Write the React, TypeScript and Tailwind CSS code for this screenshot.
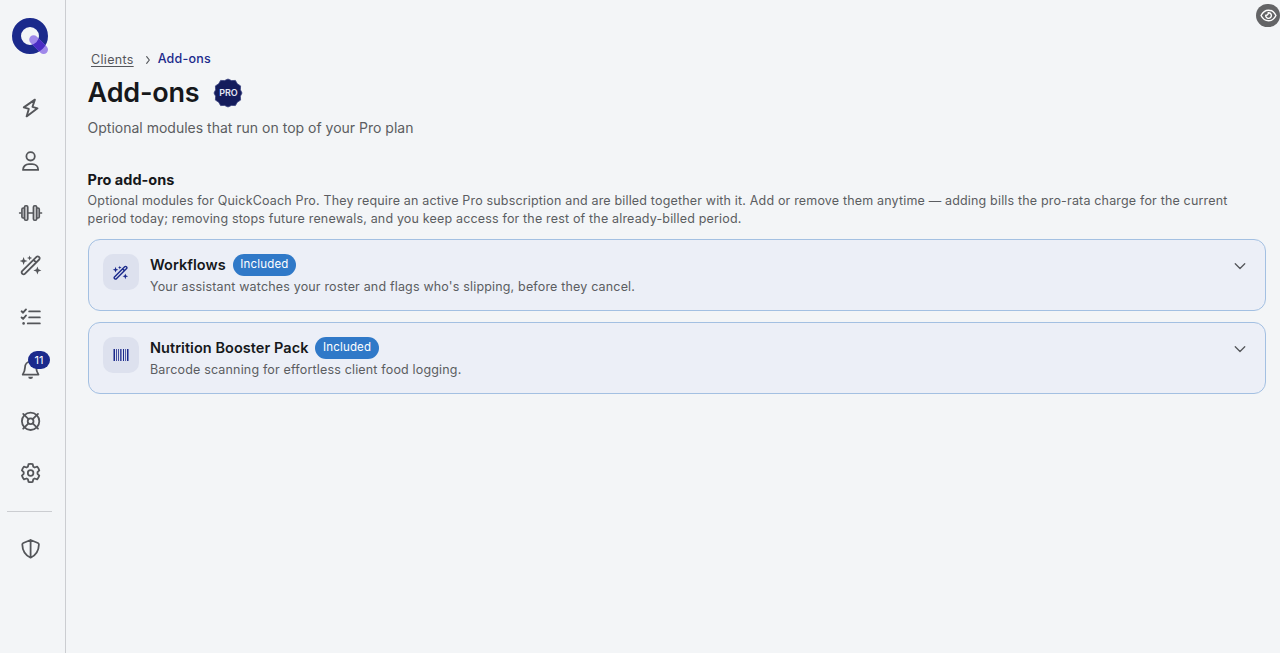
import type { ReactNode } from 'react'
import clsx from 'clsx'

function Icon({
    children,
    className = 'size-6 -translate-x-[0.4px]',
    width = 2,
}: {
    children: ReactNode
    className?: string
    width?: number
}) {
    return (
        <svg
            viewBox="0 0 24 24"
            fill="none"
            stroke="currentColor"
            strokeWidth={width}
            strokeLinecap="round"
            strokeLinejoin="round"
            className={clsx('shrink-0', className)}
        >
            {children}
        </svg>
    )
}

function BoltIcon() {
    return (
        <Icon width={1.9}>
            <path d="M16.3 3.6 5.2 11.400l5 1.500-2.200 7.500 10.900-8.100-5-1.500z" />
        </Icon>
    )
}

function UserIcon() {
    return (
        <Icon width={1.8}>
            <circle cx="12" cy="7.300" r="4.200" />
            <path d="M4.400 20.900c0-3.400 2.600-5.700 6-5.700h3.200c3.400 0 6 2.300 6 5.700z" />
        </Icon>
    )
}

function DumbbellIcon() {
    return (
        <Icon width={1.6}>
            <path d="M9.200 12h5.600M.9 12h1.200M21.900 12h1.200" />
            <g fill="#c9cacd">
                <path d="M5.900 7H4.600c-.8 0-1.300.6-1.300 1.300v7.400c0 .8.5 1.300 1.300 1.300h1.300M18.100 7h1.300c.8 0 1.300.6 1.300 1.300v7.400c0 .8-.5 1.300-1.300 1.300h-1.300" />
                <rect x="5.900" y="4.800" width="3.300" height="14.400" rx="1.300" />
                <rect x="14.800" y="4.800" width="3.300" height="14.400" rx="1.300" />
            </g>
        </Icon>
    )
}

function WandIcon({
    className,
    width = 1.8,
}: {
    className?: string
    width?: number
}) {
    return (
        <Icon className={className} width={width}>
            <path d="M3.500 18.200 17.900 3.800a1.600 1.600 0 0 1 2.300 0l.4.400a1.600 1.600 0 0 1 0 2.300L6.200 20.900a1.600 1.600 0 0 1-2.300 0l-.4-.4a1.600 1.600 0 0 1 0-2.300zM14.900 6.800l2.700 2.700" />
            <g fill="currentColor" stroke="none">
                <path d="m5 4 1.100 2.900L9 8l-2.900 1.100L5 12 3.900 9.100 1 8l2.900-1.100z" />
                <path d="m11 2.400.7 1.900 1.900.7-1.900.7L11 7.600l-.7-1.900L8.400 5l1.900-.7z" />
                <path d="m18.800 13.400 1.100 2.900 2.900 1.100-2.900 1.100-1.100 2.900-1.100-2.900-2.900-1.100 2.900-1.100z" />
            </g>
        </Icon>
    )
}

function ListIcon() {
    return (
        <Icon width={1.900}>
            <path d="m3 6.300 1.500 1.400 2.900-3.300M3 12.500l1.500 1.400 2.900-3.400M10.600 6.400h10.600M10.600 12.400h10.600M9.200 18.400h12" />
            <circle cx="5" cy="18.400" r="1.300" fill="currentColor" stroke="none" />
        </Icon>
    )
}

function BellIcon() {
    return (
        <Icon width={1.8}>
            <path d="M12 3v1.600M12 4.600c-3.400 0-5.600 2.600-5.600 5.800 0 3-.9 4.800-2.300 7.200h15.800c-1.400-2.400-2.300-4.200-2.300-7.200 0-3.200-2.200-5.800-5.600-5.800z" />
            <path d="M9.600 19.800h4.800a2.400 2.200 0 0 1-4.800 0z" fill="currentColor" stroke="none" />
        </Icon>
    )
}

function LifeRingIcon() {
    return (
        <Icon width={1.8}>
            <circle cx="12" cy="12.300" r="8.700" />
            <circle cx="12" cy="12.300" r="2.900" />
            <path d="m4.600 4.900 5.300 5.300M19.400 4.900l-5.300 5.300M4.600 19.700l5.300-5.300M19.400 19.700l-5.300-5.300" />
        </Icon>
    )
}

function GearIcon() {
    return (
        <Icon width={1.800}>
            <path d="M9.900 3.200q2.100-.6 4.200 0l.6 2.500 1.400.8 2.500-.8q1.500 1.600 2.100 3.700L18.900 11.200v1.600l1.800 1.800q-.6 2.100-2.100 3.700l-2.500-.8-1.400.8-.6 2.500q-2.100.6-4.200 0l-.6-2.500-1.400-.8-2.500.8q-1.500-1.600-2.100-3.700l1.800-1.800v-1.600L3.300 9.400q.6-2.100 2.100-3.700l2.500.8 1.400-.8z" />
            <circle cx="12" cy="12" r="2.800" />
        </Icon>
    )
}

function ShieldIcon() {
    return (
        <Icon width={1.800}>
            <path d="m12 3 7.300 3c.6.300 1 .8 1 1.400-.1 5-2.200 10.300-8.300 13.300-6.100-3-8.200-8.300-8.300-13.300 0-.6.4-1.100 1-1.400zM12 3v17.700" />
        </Icon>
    )
}

function BarcodeIcon() {
    return (
        <svg viewBox="0 0 16 14" fill="currentColor" className="h-[14px] w-4">
            <path d="M.5 1H2v12H.5zM3.200 1h.8v12h-.8zM5.200 1h.8v12h-.8zM7.200 1h1.300v12H7.200zM10 1h1v12h-1zM12 1h.7v12H12zM14 1h1.500v12H14z" />
        </svg>
    )
}

function Logo() {
    return (
        <svg viewBox="0 0 36 36" className="size-9 overflow-visible">
            <clipPath id="logo-ring">
                <path
                    clipRule="evenodd"
                    d="M18 0a18 18 0 1 1 0 36 18 18 0 0 1 0-36zM18 9a9 9 0 1 0 0 18 9 9 0 0 0 0-18z"
                />
            </clipPath>
            <circle cx="18" cy="18" r="13.500" fill="none" stroke="#1b2a8c" strokeWidth="9" />
            <path d="m21.600 21.600 10 10" stroke="#9f88ea" strokeWidth="8.800" strokeLinecap="round" />
            <path
                d="m21.600 21.600 10 10"
                stroke="#4a2bc4"
                strokeWidth="8.800"
                strokeLinecap="round"
                clipPath="url(#logo-ring)"
            />
        </svg>
    )
}

function ProBadge() {
    return (
        <div className="grid size-[30px] place-items-center">
            <svg viewBox="0 0 30 30" className="col-start-1 row-start-1 size-[30px]">
                <path
                    d="m15 1 3.500 1.600 3.900-.2 1.900 3.400 3.300 2.100-.2 3.900L29 15l-1.600 3.200.2 3.900-3.300 2.100-1.900 3.400-3.900-.2L15 29l-3.500-1.600-3.900.2-1.900-3.400-3.300-2.100.2-3.900L1 15l1.600-3.200-.2-3.900 3.300-2.100 1.900-3.400 3.900.2z"
                    fill="#141c5c"
                    stroke="#39417f"
                    strokeWidth=".8"
                    strokeLinejoin="round"
                />
            </svg>
            <span className="z-10 col-start-1 row-start-1 text-[9px] font-semibold text-[#e4e6f5]">
                PRO
            </span>
        </div>
    )
}

const navItems = [
    { id: 'activity', icon: <BoltIcon /> },
    { id: 'clients', icon: <UserIcon /> },
    { id: 'workouts', icon: <DumbbellIcon /> },
    { id: 'workflows', icon: <WandIcon /> },
    { id: 'tasks', icon: <ListIcon /> },
    { id: 'notifications', icon: <BellIcon />, count: 11 },
    { id: 'help', icon: <LifeRingIcon /> },
    { id: 'settings', icon: <GearIcon /> },
]

function Sidebar() {
    return (
        <aside className="flex w-[66px] shrink-0 flex-col border-r border-[#cbcdd1] pt-[18px] text-[#54565a]">
            <div className="pl-3">
                <Logo />
            </div>
            <nav className="mt-[28.3px] flex flex-col">
                {navItems.map((item) => (
                    <button
                        key={item.id}
                        className="relative flex h-[52.15px] w-[61px] items-center justify-center"
                    >
                        {item.icon}
                        {item.count && (
                            <span className="absolute left-[28px] top-[8px] flex h-[18px] w-[22px] items-center justify-center rounded-full bg-[#1b2a8c] text-[11px] text-white">
                                {item.count}
                            </span>
                        )}
                    </button>
                ))}
            </nav>
            <hr className="ml-[7px] mt-[11.7px] w-[45px] border-[#cbcdd1]" />
            <button className="mt-[24.500px] flex w-[61px] justify-center">
                <ShieldIcon />
            </button>
        </aside>
    )
}

function AddonCard({
    title,
    description,
    icon,
}: {
    title: string
    description: string
    icon: ReactNode
}) {
    return (
        <div className="flex h-[72px] rounded-[12px] border border-[#a3c0e2] bg-[#eceff7] pl-[14px] pr-[19px] pt-[14px]">
            <div className="flex size-9 shrink-0 items-center justify-center rounded-[10px] bg-[#dde1ee] text-[#1b2a8c]">
                {icon}
            </div>
            <div className="ml-[11px] flex-1">
                <div className="flex h-[22px] items-center gap-[7px]">
                    <h3 className="text-[14.5px] font-semibold leading-[22px] tracking-[0.05px] text-[#16181b]">
                        {title}
                    </h3>
                    <span className="h-[22px] rounded-full bg-[#3079c8] px-[7.500px] text-[11.5px] leading-[21px] tracking-[0.18px] text-white">
                        Included
                    </span>
                </div>
                <p className="mt-[2px] text-[12.5px] leading-[18px] tracking-[0.17px] text-[#5b5d61]">
                    {description}
                </p>
            </div>
            <Icon className="mt-[6px] size-3 text-[#54565a]" width={2.600}>
                <path d="m2.500 7.500 9.500 9.500 9.500-9.500" />
            </Icon>
        </div>
    )
}

export default function App() {
    return (
        <div className="flex h-[653px] w-full overflow-hidden bg-[#f3f5f7] font-['Inter',sans-serif]">
            <Sidebar />
            <main className="min-w-0 flex-1 pl-[21.600px] pr-[14px] pt-[50px]">
                <div className="flex h-[18px] items-center pl-[3.400px] text-[12.5px] leading-[18px]">
                    <a className="mt-[2px] tracking-[0.32px] text-[#54565a] underline underline-offset-2">
                        Clients
                    </a>
                    <Icon className="ml-[10px] mt-[2px] size-[8px] text-[#54565a]" width={3.500}>
                        <path d="m8 2 8 10-8 10" />
                    </Icon>
                    <span className="ml-[6px] font-medium tracking-[0.2px] text-[#1b2a8c]">
                        Add-ons
                    </span>
                </div>
                <div className="mt-[7px] flex h-9 items-center gap-[14px]">
                    <h1 className="text-[27px] font-semibold tracking-[-0.2px] text-[#16181b]">
                        Add-ons
                    </h1>
                    <ProBadge />
                </div>
                <p className="mt-[7px] text-[14px] leading-5 text-[#5b5d61]">
                    Optional modules that run on top of your Pro plan
                </p>
                <section className="mt-8">
                    <h2 className="text-[14.5px] font-bold leading-5 text-[#16181b]">
                        Pro add-ons
                    </h2>
                    <p className="mt-[2px] text-[12.5px] leading-[18px] tracking-[0.17px] text-[#5b5d61]">
                        Optional modules for QuickCoach Pro. They require an active Pro
                        subscription and are billed together with it. Add or remove them
                        anytime — adding bills the pro-rata charge for the current period
                        today; removing stops future renewals, and you keep access for the
                        rest of the already-billed period.
                    </p>
                    <div className="ml-[0.4px] mt-[11px] flex flex-col gap-[11px]">
                        <AddonCard
                            title="Workflows"
                            description="Your assistant watches your roster and flags who's slipping, before they cancel."
                            icon={<WandIcon className="size-[17px]" width={2} />}
                        />
                        <AddonCard
                            title="Nutrition Booster Pack"
                            description="Barcode scanning for effortless client food logging."
                            icon={<BarcodeIcon />}
                        />
                    </div>
                </section>
            </main>
            <button className="absolute right-0 top-1 flex h-[23px] w-6 items-center justify-center rounded-full bg-[#636466] text-white">
                <Icon className="size-[17px]" width={2}>
                    <path d="M1.500 12C4 7 7.700 4.500 12 4.500S20 7 22.500 12C20 17 16.300 19.500 12 19.500S4 17 1.500 12z" />
                    <path d="M11.600 8.100a4 4 0 1 1-3.500 3.500c1.800.6 4-1 3.500-3.500z" />
                </Icon>
            </button>
        </div>
    )
}
